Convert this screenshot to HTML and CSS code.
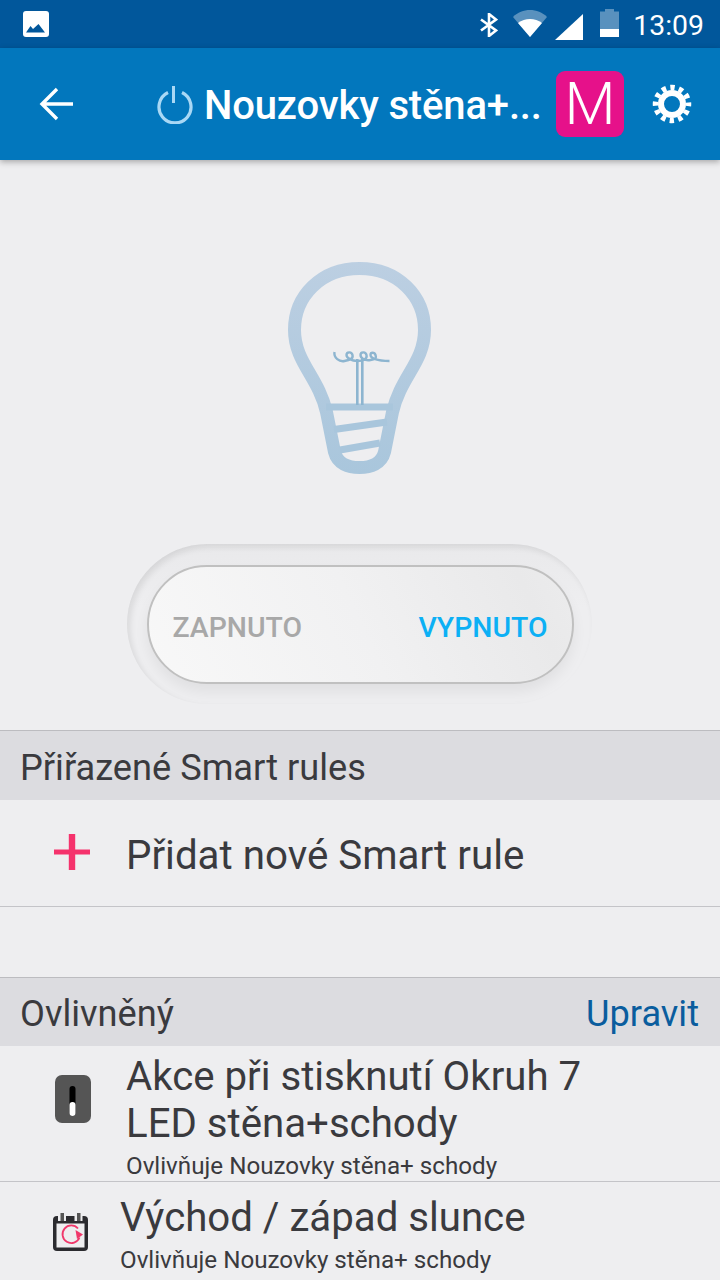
FILE: index.html
```html
<!DOCTYPE html>
<html lang="cs">
<head>
    <meta charset="UTF-8">
    <meta name="viewport" content="width=device-width, initial-scale=1.0">
    <title>Nouzovky stěna+ schody</title>
    <link rel="stylesheet" href="styles.css">
</head>
<body>
    <div class="status-bar">
        <svg class="status-photo" width="26" height="26" viewBox="0 0 26 26">
            <rect width="26" height="26" rx="3" fill="#fff"/>
            <path d="M3 21.500L7.500 15l2.500 3 5.500-5 6.500 8.500z" fill="#01579b"/>
        </svg>
        <div class="status-right">
            <svg class="status-bt" width="18" height="24" viewBox="0 0 18 24" fill="none" stroke="#fff" stroke-width="2.600">
                <path d="M1 6.500l15 11-7 5.500V1l7 5.500-15 11"/>
            </svg>
            <svg class="status-wifi" width="34" height="27" viewBox="0 0 34 27">
                <path d="M0 7C9-2.300 25-2.300 34 7L17 27z" fill="#fff" fill-opacity=".35"/>
                <path d="M5 13C12 7.500 22 7.500 29 13L17 27z" fill="#fff"/>
            </svg>
            <svg class="status-signal" width="28" height="26" viewBox="0 0 28 26">
                <path d="M28 0v26H0z" fill="#fff"/>
            </svg>
            <svg class="status-battery" width="19" height="28" viewBox="0 0 19 28">
                <path d="M5 2.500V0h9v2.500h5V28H0V2.500z" fill="#fff" fill-opacity=".35"/>
                <path d="M0 20h19v8H0z" fill="#fff"/>
            </svg>
            <span class="status-time">13:09</span>
        </div>
    </div>

    <header class="app-bar">
        <svg class="back-icon" width="36" height="36" viewBox="0 0 36 36" fill="none" stroke="#fff" stroke-width="3.400">
            <path d="M34 18H4M18 3L3 18l15 15"/>
        </svg>
        <div class="title-wrap">
            <svg class="power-icon" width="36" height="38" viewBox="0 0 36 38" fill="none" stroke="#a9d8f5" stroke-width="3.200">
                <path d="M11 6.500a16 16 0 1 0 14 0"/>
                <path d="M16.500 0v17" stroke-width="3"/>
            </svg>
            <h1 class="title">Nouzovky stěna+...</h1>
        </div>
        <div class="badge">M</div>
        <svg class="gear-icon" width="40" height="40" viewBox="0 0 40 40" fill="none" stroke="#fff">
            <circle cx="20" cy="20" r="16.500" stroke-width="5.500" stroke-dasharray="4.400 4.240" stroke-dashoffset="2.200"/>
            <circle cx="20" cy="20" r="11" stroke-width="6"/>
        </svg>
    </header>

    <section class="hero">
        <svg class="bulb" width="143" height="212" viewBox="0 0 143 212" fill="none">
            <defs>
                <linearGradient id="bulbFade" gradientUnits="userSpaceOnUse" x1="0" y1="0" x2="0" y2="212">
                    <stop offset="0" stop-color="#bccfe2"/>
                    <stop offset="1" stop-color="#a9c6dc"/>
                </linearGradient>
            </defs>
            <path stroke="url(#bulbFade)" stroke-width="13" d="M71.500 6.500C33 6.500 6.500 34 6.500 68c0 32 24 47 32 82l8 40c3 12 14 15.500 25 15.500s22-3.500 25-15.500l8-40c8-35 32-50 32-82C136.500 34 110 6.500 71.500 6.500z"/>
            <path stroke="#a9c6dc" stroke-width="7" d="M38 145h67M46 167.500l53-7.500M52 188l40-7"/>
            <path stroke="#8db5d0" stroke-width="2.600" d="M69.300 143V97M74.300 143V97"/>
            <path stroke="#8db5d0" stroke-width="2.400" d="M46.500 90c-1 6 5 10 10 9s9-2 8-6-6-3-6 0 5 6 11 6 10-2 9-6-6-3-6 0 4 6 10 5 6-2 5-5-5-3-5 0 6 6 19 6"/>
        </svg>
        <div class="switch-well">
            <div class="switch">
                <span class="switch-on">ZAPNUTO</span>
                <span class="switch-off">VYPNUTO</span>
            </div>
        </div>
    </section>

    <div class="section-head"><span>Přiřazené Smart rules</span></div>
    <div class="add-row">
        <svg class="plus-icon" width="36" height="36" viewBox="0 0 36 36">
            <path d="M14.800 0h6.400v15.500H36v5H21.200V36h-6.400V20.500H0v-5h14.800z" fill="#f5326c"/>
        </svg>
        <span>Přidat nové Smart rule</span>
    </div>

    <div class="spacer"></div>

    <div class="section-head section-head-short">
        <span>Ovlivněný</span>
        <span class="edit-link">Upravit</span>
    </div>
    <div class="item item-switch">
        <div class="item-icon">
            <svg width="36" height="48" viewBox="0 0 36 48">
                <rect width="36" height="48" rx="7" fill="#555"/>
                <rect x="14.500" y="11" width="6" height="30" rx="3" fill="#000"/>
                <rect x="14.500" y="27" width="6" height="14" rx="3" fill="#fff"/>
            </svg>
        </div>
        <div class="item-text">
            <div class="item-title">Akce při stisknutí Okruh 7<br>LED stěna+schody</div>
            <div class="item-sub">Ovlivňuje Nouzovky stěna+ schody</div>
        </div>
    </div>
    <div class="item item-sun">
        <div class="item-icon">
            <svg width="35" height="38" viewBox="0 0 35 38">
                <rect y="3" width="35" height="35" rx="4" fill="#2b2b2f"/>
                <rect x="3.500" y="10.500" width="28" height="24" fill="#eeeef0"/>
                <rect x="5" y="0" width="8" height="8" fill="#eeeef0"/>
                <rect x="21.500" y="0" width="8" height="8" fill="#eeeef0"/>
                <rect x="7.500" y="0" width="3.500" height="8" fill="#555"/>
                <rect x="24" y="0" width="3.500" height="8" fill="#555"/>
                <path d="M25 15.500a8.800 8.800 0 1 0 1.500 9" fill="none" stroke="#f0386b" stroke-width="1.800"/>
                <path d="M22.500 17l7.500 4.500-6 4.500z" fill="#f0386b"/>
            </svg>
        </div>
        <div class="item-text">
            <div class="item-title">Východ / západ slunce</div>
            <div class="item-sub">Ovlivňuje Nouzovky stěna+ schody</div>
        </div>
    </div>
</body>
</html>
```

FILE: styles.css
```css
html, body {
    margin: 0;
    height: 1280px;
    overflow: hidden;
}
body {
    font-family: Roboto, "Noto Sans", sans-serif;
    background: #eeeef0;
    color: #3a3a3e;
}
.status-bar {
    height: 48px;
    background: #01579b;
    display: flex;
    align-items: center;
    justify-content: space-between;
    padding: 0 16px 0 23px;
}
.status-right {
    display: flex;
    align-items: center;
}
.status-bt {
    margin-top: 2px;
}
.status-wifi {
    margin-left: 15px;
    margin-top: -1px;
}
.status-signal {
    margin-left: 8px;
    margin-top: 5px;
}
.status-battery {
    margin-left: 17px;
    margin-top: -2px;
}
.status-time {
    margin-left: 14px;
    color: #fff;
    font-size: 28.400px;
    margin-top: 2px;
}
.app-bar {
    height: 112px;
    background: #0277bd;
    box-shadow: 0 2px 6px rgba(0, 0, 0, 0.3);
    display: flex;
    align-items: center;
    position: relative;
    padding-left: 39px;
}
.back-icon {
    flex: none;
}
.title-wrap {
    display: flex;
    align-items: center;
    margin-left: 82px;
    width: 399px;
}
.power-icon {
    flex: none;
    margin-top: 2px;
}
.title {
    margin: 3px 0 0 11px;
    color: #fff;
    font-size: 40px;
    font-weight: 500;
    letter-spacing: -0.15px;
    white-space: nowrap;
}
.badge {
    width: 68px;
    height: 66px;
    border-radius: 9px;
    background: #e6118a;
    color: #fff;
    font-size: 59px;
    font-weight: 300;
    line-height: 66px;
    text-align: center;
    flex: none;
}
.gear-icon {
    margin-left: 28px;
    flex: none;
}
.hero {
    height: 570px;
    display: flex;
    flex-direction: column;
    align-items: center;
}
.bulb {
    margin-top: 102px;
    margin-right: 1px;
}
.switch-well {
    margin-top: 70px;
    margin-right: 2px;
    width: 465px;
    height: 160px;
    box-sizing: border-box;
    border-radius: 80px;
    padding: 21px 18px 0 20px;
    background: linear-gradient(180deg, #e9e9eb 0%, #eeeef0 40%);
    box-shadow: inset 3px 3px 6px rgba(0, 0, 0, 0.09);
}
.switch {
    height: 119px;
    border-radius: 60px;
    border: 2px solid #c0c0c0;
    box-sizing: border-box;
    background: linear-gradient(65deg, #f8f8f8 0%, #f1f1f2 50%, #e9e9ea 88%, #ececed 100%);
    box-shadow: 0 8px 14px rgba(0, 0, 0, 0.06);
    display: flex;
    align-items: center;
    justify-content: space-between;
    padding: 6px 24px 0;
    font-size: 28.400px;
    font-weight: 500;
}
.switch-on {
    color: #a8a8a8;
}
.switch-off {
    color: #0cb0f5;
}
.section-head {
    height: 70px;
    box-sizing: border-box;
    background: #dcdce0;
    border-top: 1px solid #bcbcc0;
    padding: 3px 21px 0 20px;
    display: flex;
    align-items: center;
    justify-content: space-between;
    font-size: 36.200px;
}
.section-head-short {
    height: 69px;
}
.edit-link {
    color: #0a5d9e;
}
.add-row {
    height: 107px;
    box-sizing: border-box;
    border-bottom: 1px solid #c4c4c8;
    display: flex;
    align-items: center;
    padding-left: 54px;
    font-size: 40.300px;
}
.plus-icon {
    margin-bottom: 2px;
}
.add-row span {
    margin-left: 36px;
    padding-top: 5px;
}
.spacer {
    height: 70px;
}
.item {
    display: flex;
    box-sizing: border-box;
}
.item-switch {
    height: 136px;
    border-bottom: 1px solid #c4c4c8;
    padding-left: 55px;
}
.item-sun {
    height: 99px;
    padding-left: 53px;
}
.item-icon {
    flex: none;
    width: 36px;
}
.item-switch .item-icon {
    margin-top: 29px;
}
.item-sun .item-icon {
    margin-top: 31px;
}
.item-switch .item-text {
    margin-left: 35px;
    padding-top: 7px;
}
.item-sun .item-text {
    margin-left: 31px;
    padding-top: 12px;
}
.item-title {
    font-size: 40.200px;
    line-height: 47px;
}
.item-sub {
    font-size: 24.200px;
    line-height: 30px;
    margin-top: 4px;
}
```
